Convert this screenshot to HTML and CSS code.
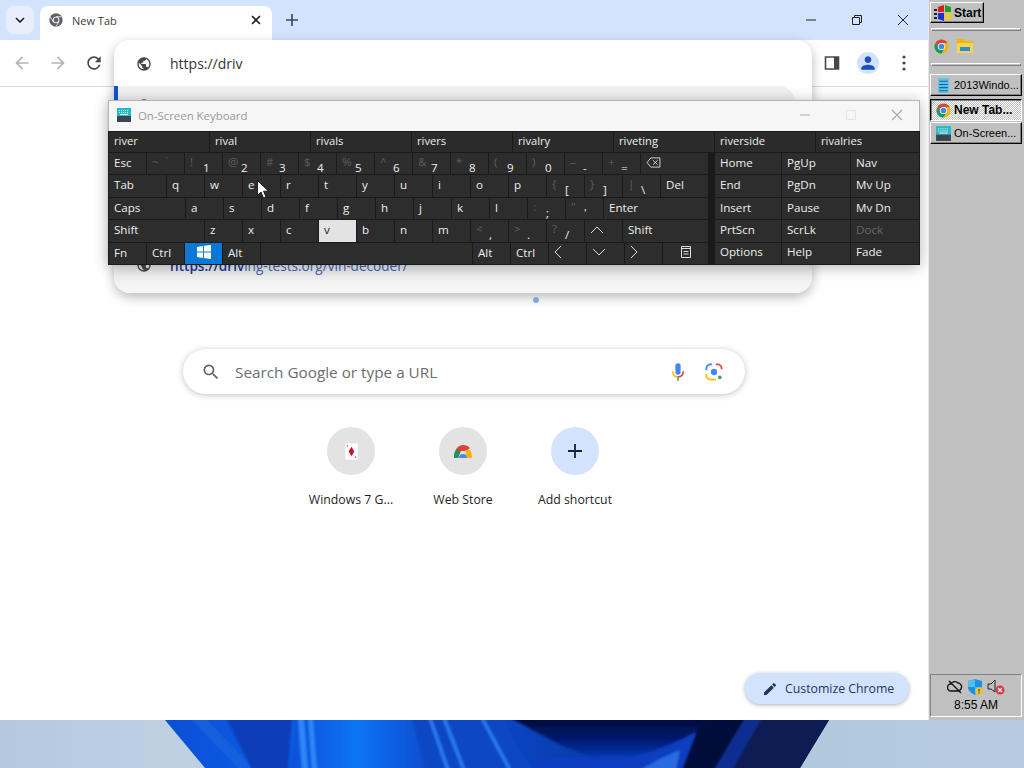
FILE: index.html
```html
<!DOCTYPE html>
<html lang="en">
<head>
    <meta charset="UTF-8">
    <title>New Tab</title>
    <link rel="stylesheet" href="styles.css">
</head>
<body>
<svg class="defs" width="0" height="0">
    <defs>
        <symbol id="chrome-logo" viewBox="0 0 24 24">
            <path fill="#db4437" d="M12 2A10 10 0 0 0 3.34 7l4.33 7.5A5 5 0 0 1 12 7h8.66A10 10 0 0 0 12 2z"/>
            <path fill="#f4b400" d="M20.66 7H12a5 5 0 0 1 4.33 7.5L12 22A10 10 0 0 0 20.66 7z"/>
            <path fill="#0f9d58" d="M3.34 7A10 10 0 0 0 12 22l4.33-7.5a5 5 0 0 1-8.66 0z"/>
            <circle cx="12" cy="12" r="5" fill="#fff"/>
            <circle cx="12" cy="12" r="4" fill="#4285f4"/>
        </symbol>
        <symbol id="globe" viewBox="0 0 24 24">
            <path d="M12 2C6.48 2 2 6.48 2 12s4.48 10 10 10 10-4.48 10-10S17.52 2 12 2zm-1 17.93c-3.95-.49-7-3.85-7-7.93 0-.62.08-1.21.21-1.79L9 15v1c0 1.1.9 2 2 2v1.93zm6.9-2.54c-.26-.81-1-1.39-1.9-1.39h-1v-3c0-.55-.45-1-1-1H8v-2h2c.55 0 1-.45 1-1V7h2c1.1 0 2-.9 2-2v-.41c2.93 1.19 5 4.06 5 7.41 0 2.08-.8 3.97-2.1 5.39z"/>
        </symbol>
        <symbol id="osk-logo" viewBox="0 0 16 16">
            <rect x="1" y="1" width="14" height="8" fill="#2bb8c8"/>
            <rect x="1" y="9" width="14" height="6" fill="#3c4450"/>
            <path d="M3 3h1v1H3zm2 0h1v1H5zm2 0h1v1H7zm2 0h1v1H9zm2 0h1v1h-1zM3 5h1v1H3zm2 0h1v1H5zm2 0h1v1H7zm2 0h1v1H9zm2 0h1v1h-1zM4 7h8v1H4z" fill="#d8f6fa"/>
        </symbol>
    </defs>
</svg>

<div class="desktop">
    <svg class="wallpaper" viewBox="0 0 1024 48" width="1024" height="48">
        <defs>
            <linearGradient id="wp-base" x1="0" x2="1" y1="0" y2="0">
                <stop offset="0" stop-color="#0b4fd6"/>
                <stop offset="0.25" stop-color="#0a62ea"/>
                <stop offset="0.5" stop-color="#0a45c4"/>
                <stop offset="1" stop-color="#06225f"/>
            </linearGradient>
            <linearGradient id="wp-bright" x1="0" x2="1" y1="0" y2="0">
                <stop offset="0" stop-color="#0a50d8"/>
                <stop offset="0.5" stop-color="#0b74f6"/>
                <stop offset="1" stop-color="#0a4fd0"/>
            </linearGradient>
            <linearGradient id="wp-dark" x1="0" x2="0" y1="0" y2="1">
                <stop offset="0" stop-color="#000c3a"/>
                <stop offset="0.55" stop-color="#001a70"/>
                <stop offset="1" stop-color="#0838b8"/>
            </linearGradient>
            <clipPath id="wp-clip"><path d="M165 0H829L800 48H205z"/></clipPath>
            <filter id="wp-soft"><feGaussianBlur stdDeviation="1.2"/></filter>
        </defs>
        <g clip-path="url(#wp-clip)">
            <rect x="160" width="680" height="48" fill="url(#wp-base)"/>
            <g filter="url(#wp-soft)">
                <path fill="#1560e0" d="M205 -2L255 50H240L190 -2z"/>
                <path fill="#0a3eb8" d="M226 -2L252 50H288L292 -2z"/>
                <path fill="url(#wp-bright)" d="M296 -2L290 50H425L412 -2z"/>
                <path fill="#2f86f8" d="M298 -2H304L308 50H302zM308 -2H313L317 50H312z"/>
                <path fill="#0a47c4" d="M412 -2H505C512 20 525 35 532 50H425z"/>
                <path fill="#2a78f0" d="M428 -2H432L450 50H446zM442 -2H446L466 50H462zM480 -2H484L512 50H508z"/>
                <path fill="#0a3cc0" d="M530 50C545 30 575 38 612 38C650 38 675 20 700 8L690 50z"/>
                <path fill="url(#wp-dark)" d="M510 -2H724C690 15 650 38 612 38C575 38 545 15 510 -2z"/>
                <path fill="#2a6ae0" d="M640 50C650 44 665 36 680 30L676 50z"/>
                <path fill="#000e3a" d="M698 8L724 -2H750L720 50H682z"/>
                <path fill="#0a2f90" d="M745 -2H762L732 50H714z"/>
                <path fill="#071b52" d="M762 -2H835L805 50H732z"/>
            </g>
        </g>
    </svg>

    <div class="chrome">
        <div class="tabstrip">
            <div class="tab-search">
                <svg viewBox="0 0 10 6" width="10" height="6"><path d="M1 1l4 4 4-4" fill="none" stroke="#1f1f1f" stroke-width="1.6"/></svg>
            </div>
            <div class="tab">
                <svg class="tab-favicon" viewBox="0 0 24 24" width="16" height="16">
                    <circle cx="12" cy="12" r="10" fill="#5f6368"/>
                    <circle cx="12" cy="12" r="5" fill="#fff"/>
                    <circle cx="12" cy="12" r="3.6" fill="#5f6368"/>
                    <path d="M12 7h8M16.3 14.5L12 22M7.7 14.5L3.3 7" stroke="#fff" stroke-width="1.1"/>
                </svg>
                <span class="tab-title">New Tab</span>
                <svg viewBox="0 0 10 10" width="10" height="10"><path d="M1 1l8 8M9 1L1 9" stroke="#1f1f1f" stroke-width="1.6"/></svg>
            </div>
            <svg class="new-tab" viewBox="0 0 12 12" width="12" height="12"><path d="M6 0v12M0 6h12" stroke="#3c4a66" stroke-width="1.7"/></svg>
            <div class="win-btns">
                <svg viewBox="0 0 12 12" width="12" height="12"><path d="M1 6h10" stroke="#222" stroke-width="1"/></svg>
                <svg viewBox="0 0 12 12" width="12" height="12"><path d="M1.5 3.5h7v7h-7zM3.5 3.5v-2h7v7h-2" fill="none" stroke="#222" stroke-width="1"/></svg>
                <svg viewBox="0 0 12 12" width="12" height="12"><path d="M1 1l10 10M11 1L1 11" stroke="#222" stroke-width="1"/></svg>
            </div>
        </div>
        <div class="toolbar">
            <svg class="tb-icon" viewBox="0 0 24 24" width="20" height="20" fill="#b4b6b9"><path d="M20 11H7.83l5.59-5.59L12 4l-8 8 8 8 1.41-1.41L7.83 13H20v-2z"/></svg>
            <svg class="tb-icon" viewBox="0 0 24 24" width="20" height="20" fill="#b4b6b9"><path d="M4 11h12.17l-5.59-5.59L12 4l8 8-8 8-1.41-1.41L16.17 13H4v-2z"/></svg>
            <svg class="tb-icon" viewBox="0 0 24 24" width="20" height="20" fill="#474747"><path d="M17.65 6.35A7.958 7.958 0 0 0 12 4c-4.42 0-7.99 3.58-7.99 8s3.57 8 7.99 8c3.73 0 6.84-2.55 7.73-6h-2.08A5.99 5.99 0 0 1 12 18c-3.31 0-6-2.69-6-6s2.69-6 6-6c1.66 0 3.14.69 4.22 1.78L13 11h7V4l-2.35 2.35z"/></svg>
            <div class="toolbar-right">
                <svg viewBox="0 0 16 16" width="16" height="16"><path d="M1.5 2h13v12h-13z" fill="#fff" stroke="#474747" stroke-width="1.6"/><path d="M10 2h4.5v12H10z" fill="#474747"/></svg>
                <div class="avatar">
                    <svg viewBox="0 0 24 24" width="20" height="20" fill="#1a4fc0"><path d="M12 12c2.21 0 4-1.79 4-4s-1.79-4-4-4-4 1.79-4 4 1.79 4 4 4zm0 2c-2.67 0-8 1.34-8 4v2h16v-2c0-2.66-5.33-4-8-4z"/></svg>
                </div>
                <svg viewBox="0 0 4 16" width="4" height="16" fill="#474747"><circle cx="2" cy="2" r="1.6"/><circle cx="2" cy="8" r="1.6"/><circle cx="2" cy="14" r="1.6"/></svg>
            </div>
        </div>
        <div class="ntp">
            <div class="searchbox">
                <svg viewBox="0 0 24 24" width="20" height="20" fill="#5f6368"><path d="M15.5 14h-.79l-.28-.27A6.47 6.47 0 0 0 16 9.5 6.5 6.5 0 1 0 9.5 16c1.61 0 3.09-.59 4.23-1.57l.27.28v.79l5 4.99L20.49 19l-4.99-5zm-6 0C7.01 14 5 11.99 5 9.5S7.01 5 9.5 5 14 7.01 14 9.5 11.99 14 9.5 14z"/></svg>
                <span class="search-text">Search Google or type a URL</span>
                <svg class="mic" viewBox="0 0 16 22" width="14" height="20">
                    <rect x="5" y="1" width="6" height="13" rx="3" fill="#4285f4"/>
                    <path d="M2 10c0 4 2.5 6.5 6 6.5" fill="none" stroke="#fbbc04" stroke-width="1.8"/>
                    <path d="M14 10c0 4-2.5 6.5-6 6.5" fill="none" stroke="#ea4335" stroke-width="1.8"/>
                    <path d="M8 16.5V21" stroke="#34a853" stroke-width="1.8"/>
                </svg>
                <svg class="lens" viewBox="0 0 20 20" width="18" height="18">
                    <path d="M1.5 8V6a4.5 4.5 0 0 1 4.5-4.5h2" fill="none" stroke="#4285f4" stroke-width="2"/>
                    <path d="M12 1.5h2A4.5 4.5 0 0 1 18.5 6v1" fill="none" stroke="#ea4335" stroke-width="2"/>
                    <path d="M1.5 12v2A4.5 4.5 0 0 0 6 18.5h6" fill="none" stroke="#fbbc04" stroke-width="2"/>
                    <circle cx="10" cy="10" r="3.5" fill="#4285f4"/>
                    <circle cx="16.5" cy="16" r="2" fill="#34a853"/>
                </svg>
            </div>
            <div class="shortcuts">
                <div class="shortcut">
                    <div class="shortcut-icon">
                        <svg viewBox="0 0 16 20" width="15" height="19">
                            <rect x="1" y="1" width="14" height="18" rx="1" fill="#fff" stroke="#ddd" stroke-width="0.5"/>
                            <path d="M8 5l3 5-3 5-3-5z" fill="#c8102e"/>
                            <path d="M3 3h1.5v2H3zM11.5 15H13v2h-1.5z" fill="#d9798a"/>
                        </svg>
                    </div>
                    <span class="shortcut-label">Windows 7 G...</span>
                </div>
                <div class="shortcut">
                    <div class="shortcut-icon">
                        <svg viewBox="0 0 20 14" width="20" height="14">
                            <path d="M1 14C1 6 5 1 10 1c3 0 5 1 7 3l-4 3H8l-3 7z" fill="#db4437"/>
                            <path d="M1 14C1 10 2 7 4 5l3 3-2 6z" fill="#0f9d58"/>
                            <path d="M12 6h5c1.5 2 2 5 2 8h-5z" fill="#f4b400"/>
                            <path d="M6 14a4 4 0 0 1 8 0z" fill="#4285f4"/>
                        </svg>
                    </div>
                    <span class="shortcut-label">Web Store</span>
                </div>
                <div class="shortcut">
                    <div class="shortcut-icon shortcut-add">
                        <svg viewBox="0 0 14 14" width="14" height="14"><path d="M7 0v14M0 7h14" stroke="#14213d" stroke-width="1.8"/></svg>
                    </div>
                    <span class="shortcut-label">Add shortcut</span>
                </div>
            </div>
            <div class="customize">
                <svg viewBox="0 0 24 24" width="16" height="16" fill="#1f3760"><path d="M3 17.25V21h3.75L17.81 9.94l-3.75-3.75L3 17.25zM20.71 7.04a1 1 0 0 0 0-1.41l-2.34-2.34a1 1 0 0 0-1.41 0l-1.83 1.83 3.75 3.75 1.83-1.83z"/></svg>
                <span>Customize Chrome</span>
            </div>
        </div>

        <div class="omnibox">
            <div class="omni-input">
                <svg viewBox="0 0 24 24" width="16" height="16" fill="#474747"><use href="#globe"/></svg>
                <span>https://driv</span>
            </div>
            <div class="omni-row omni-selected">
                <svg viewBox="0 0 24 24" width="16" height="16" fill="#474747"><use href="#globe"/></svg>
            </div>
            <div class="omni-row omni-last">
                <svg viewBox="0 0 24 24" width="16" height="16" fill="#474747"><use href="#globe"/></svg>
                <span class="omni-url"><b>https://driv</b>ing-tests.org/vin-decoder/</span>
            </div>
        </div>
        <div class="logo-dot"></div>
    </div>

    <div class="osk">
        <div class="osk-title">
            <svg viewBox="0 0 16 16" width="16" height="16"><use href="#osk-logo"/></svg>
            <span class="osk-name">On-Screen Keyboard</span>
            <div class="osk-btns">
                <svg viewBox="0 0 12 12" width="12" height="12"><path d="M1 6h10" stroke="#aaa"/></svg>
                <svg viewBox="0 0 12 12" width="12" height="12"><path d="M1.5 1.5h9v9h-9z" fill="none" stroke="#e4e4e4"/></svg>
                <svg viewBox="0 0 12 12" width="12" height="12"><path d="M1 1l10 10M11 1L1 11" stroke="#aaa" stroke-width="1.2"/></svg>
            </div>
        </div>
        <div class="osk-suggest">
            <div>river</div><div>rival</div><div>rivals</div><div>rivers</div>
            <div>rivalry</div><div>riveting</div><div>riverside</div><div class="suggest-last">rivalries</div>
        </div>
        <div class="osk-keys">
            <div class="osk-main">
                <div class="key-row">
                    <div class="key">Esc</div>
                    <div class="key pair pair-dim"><i>~</i><b>`</b></div>
                    <div class="key pair"><i>!</i><b>1</b></div>
                    <div class="key pair"><i>@</i><b>2</b></div>
                    <div class="key pair"><i>#</i><b>3</b></div>
                    <div class="key pair"><i>$</i><b>4</b></div>
                    <div class="key pair"><i>%</i><b>5</b></div>
                    <div class="key pair"><i>^</i><b>6</b></div>
                    <div class="key pair"><i>&amp;</i><b>7</b></div>
                    <div class="key pair"><i>*</i><b>8</b></div>
                    <div class="key pair"><i>(</i><b>9</b></div>
                    <div class="key pair"><i>)</i><b>0</b></div>
                    <div class="key pair"><i>–</i><b>-</b></div>
                    <div class="key pair"><i>+</i><b>=</b></div>
                    <div class="key key-fill">
                        <svg viewBox="0 0 16 12" width="15" height="11"><path d="M5 1h10v10H5L1 6zM7.5 3.5l5 5M12.5 3.5l-5 5" fill="none" stroke="#ddd"/></svg>
                    </div>
                </div>
                <div class="key-row">
                    <div class="key key-tab">Tab</div>
                    <div class="key">q</div><div class="key">w</div><div class="key">e</div><div class="key">r</div>
                    <div class="key">t</div><div class="key">y</div><div class="key">u</div><div class="key">i</div>
                    <div class="key">o</div><div class="key">p</div>
                    <div class="key pair"><i>{</i><b>[</b></div>
                    <div class="key pair"><i>}</i><b>]</b></div>
                    <div class="key pair"><i>|</i><b>\</b></div>
                    <div class="key key-fill">Del</div>
                </div>
                <div class="key-row">
                    <div class="key key-caps">Caps</div>
                    <div class="key">a</div><div class="key">s</div><div class="key">d</div><div class="key">f</div>
                    <div class="key">g</div><div class="key">h</div><div class="key">j</div><div class="key">k</div>
                    <div class="key">l</div>
                    <div class="key pair"><i>:</i><b>;</b></div>
                    <div class="key pair"><i>"</i><b>'</b></div>
                    <div class="key key-fill">Enter</div>
                </div>
                <div class="key-row">
                    <div class="key key-shift">Shift</div>
                    <div class="key">z</div><div class="key">x</div><div class="key">c</div>
                    <div class="key key-on">v</div>
                    <div class="key">b</div><div class="key">n</div><div class="key">m</div>
                    <div class="key pair"><i>&lt;</i><b>,</b></div>
                    <div class="key pair"><i>&gt;</i><b>.</b></div>
                    <div class="key pair"><i>?</i><b>/</b></div>
                    <div class="key">
                        <svg viewBox="0 0 14 8" width="14" height="8"><path d="M1 7l6-6 6 6" fill="none" stroke="#ddd"/></svg>
                    </div>
                    <div class="key key-fill">Shift</div>
                </div>
                <div class="key-row">
                    <div class="key">Fn</div>
                    <div class="key">Ctrl</div>
                    <div class="key key-win">
                        <svg viewBox="0 0 14 14" width="14" height="14" fill="#fff"><path d="M0 2l6-1v5.5H0zM7 .8L14 0v6.5H7zM0 7.5h6V13l-6-1zM7 7.5h7V14l-7-1z"/></svg>
                    </div>
                    <div class="key">Alt</div>
                    <div class="key key-space"></div>
                    <div class="key">Alt</div>
                    <div class="key">Ctrl</div>
                    <div class="key">
                        <svg viewBox="0 0 8 14" width="8" height="14"><path d="M7 1L1 7l6 6" fill="none" stroke="#ddd"/></svg>
                    </div>
                    <div class="key">
                        <svg viewBox="0 0 14 8" width="14" height="8"><path d="M1 1l6 6 6-6" fill="none" stroke="#ddd"/></svg>
                    </div>
                    <div class="key">
                        <svg viewBox="0 0 8 14" width="8" height="14"><path d="M1 1l6 6-6 6" fill="none" stroke="#ddd"/></svg>
                    </div>
                    <div class="key key-fill key-menu">
                        <svg viewBox="0 0 10 12" width="10" height="12"><path d="M.5.5h9v11h-9zM.5 2.5h9M2.5 5.5h5M2.5 8h5" fill="none" stroke="#ddd"/></svg>
                    </div>
                </div>
            </div>
            <div class="osk-side">
                <div class="key">Home</div><div class="key">PgUp</div><div class="key">Nav</div>
                <div class="key">End</div><div class="key">PgDn</div><div class="key">Mv Up</div>
                <div class="key">Insert</div><div class="key">Pause</div><div class="key">Mv Dn</div>
                <div class="key">PrtScn</div><div class="key">ScrLk</div><div class="key key-off">Dock</div>
                <div class="key">Options</div><div class="key">Help</div><div class="key">Fade</div>
            </div>
        </div>
    </div>

    <svg class="cursor" viewBox="0 0 12 19" width="12" height="19"><path d="M.5.5v15l3.5-3.5 2.5 6 2.5-1-2.500-5.800h5z" fill="#fff" stroke="#000" stroke-width="0.8"/></svg>

    <div class="taskbar">
        <div class="start-btn">
            <svg viewBox="0 0 18 16" width="18" height="16">
                <path d="M0 4h3v2H0zM0 8h3v2H0zM0 12h3v2H0z" fill="#222"/>
                <path d="M4 2l6-2v7H4z" fill="#d82020"/>
                <path d="M11 0l6 2v5h-6z" fill="#20a020"/>
                <path d="M4 8h6v8l-6-2z" fill="#2030d0"/>
                <path d="M11 8h6v6l-6 2z" fill="#e8d020"/>
            </svg>
            <span>Start</span>
        </div>
        <div class="groove"></div>
        <div class="quick">
            <svg viewBox="0 0 24 24" width="17" height="17"><use href="#chrome-logo"/></svg>
            <svg viewBox="0 0 18 16" width="18" height="16">
                <path d="M1 1h6l2 2h8v4H1z" fill="#f2b705"/>
                <path d="M1 5h16v10H1z" fill="#fbd24e"/>
                <path d="M4 9h10v4H4z" fill="#2a8fd8"/>
            </svg>
        </div>
        <div class="groove"></div>
        <div class="task">
            <svg viewBox="0 0 12 16" width="17" height="17">
                <path d="M1 1h10v14H1z" fill="#5fc0e8"/>
                <path d="M2 4h8M2 7h8M2 10h8M2 13h8" stroke="#0a6aa0"/>
            </svg>
            <span>2013Windo...</span>
        </div>
        <div class="task task-active">
            <svg viewBox="0 0 24 24" width="17" height="17"><use href="#chrome-logo"/></svg>
            <span>New Tab...</span>
        </div>
        <div class="task">
            <svg viewBox="0 0 16 16" width="17" height="17"><use href="#osk-logo"/></svg>
            <span>On-Screen...</span>
        </div>
        <div class="tray">
            <div class="tray-icons">
                <svg viewBox="0 0 16 14" width="16" height="14"><path d="M4 11a3.5 3.5 0 0 1 0-7c1-2.5 5-3.5 7-1 2 0 4 2 3.5 4.5C14 10 12 11 10 11zM2 1l12 12" fill="none" stroke="#111" stroke-width="1.3"/></svg>
                <svg viewBox="0 0 16 16" width="16" height="16">
                    <path d="M8 0l7 2v6c0 4-3 6-7 8-4-2-7-4-7-8V2z" fill="#1f8fe0"/>
                    <path d="M8 0v8H1V2zM8 8h7c0 4-3 6-7 8z" fill="#56bdf2"/>
                    <circle cx="12" cy="12" r="3.6" fill="#f5c518"/>
                    <path d="M12 10v2.5M12 13.5v1" stroke="#222"/>
                </svg>
                <svg viewBox="0 0 18 16" width="18" height="16">
                    <path d="M1 5h3l4-4v12L4 10H1z" fill="#c0c0c0" stroke="#222"/>
                    <circle cx="13" cy="11" r="4.5" fill="#d9363e"/>
                    <path d="M11 9l4 4M15 9l-4 4" stroke="#fff" stroke-width="1.2"/>
                </svg>
            </div>
            <span class="clock">8:55 AM</span>
        </div>
    </div>
</div>
</body>
</html>
```

FILE: styles.css
```css
* {
    box-sizing: border-box;
}
html, body {
    margin: 0;
    height: 768px;
    overflow: hidden;
}
.defs {
    position: absolute;
}
.desktop {
    position: relative;
    width: 1024px;
    height: 768px;
    overflow: hidden;
    background: linear-gradient(to right, #b4c9de, #c4d3e5 25%, #b2c9dd 80%, #b6cbdf);
    font-family: "Open Sans", sans-serif;
}
.wallpaper {
    position: absolute;
    left: 0;
    bottom: 0;
}

/* chrome window */
.chrome {
    position: absolute;
    left: 0;
    top: 0;
    width: 928px;
    height: 720px;
    display: flex;
    flex-direction: column;
    background: #fff;
}
.tabstrip {
    height: 40px;
    flex: none;
    display: flex;
    align-items: flex-start;
    background: #d3e3fd;
    padding-left: 6px;
}
.tab-search {
    width: 28px;
    height: 28px;
    margin-top: 6px;
    border-radius: 8px;
    background: #e6eefc;
    display: flex;
    align-items: center;
    justify-content: center;
}
.tab {
    width: 232px;
    height: 34px;
    margin: 6px 0 0 6px;
    padding: 0 11px 6px 8px;
    background: #fff;
    border-radius: 8px 8px 0 0;
    display: flex;
    align-items: center;
}
.tab-favicon {
    margin-right: 8px;
}
.tab-title {
    flex: 1;
    font-size: 11px;
    color: #3c3c3c;
}
.new-tab {
    margin: 14px 0 0 14px;
}
.win-btns {
    margin-left: auto;
    margin-top: 14px;
    padding-right: 19px;
    display: flex;
    gap: 34px;
}
.toolbar {
    height: 47px;
    flex: none;
    display: flex;
    align-items: center;
    gap: 16px;
    padding: 0 6px 1px 12px;
    background: #fff;
    border-bottom: 1px solid #dcdcdc;
    border-radius: 8px 8px 0 0;
}
.toolbar-right {
    margin-left: auto;
    display: grid;
    grid-template-columns: repeat(3, 36px);
    align-items: center;
    justify-items: center;
}
.avatar {
    width: 22px;
    height: 22px;
    border-radius: 50%;
    background: #d3e3fd;
    display: flex;
    align-items: center;
    justify-content: center;
}

/* new tab page */
.ntp {
    flex: 1;
    position: relative;
    display: flex;
    flex-direction: column;
    align-items: center;
    padding-top: 262px;
}
.searchbox {
    width: 562px;
    height: 45px;
    border-radius: 23px;
    background: #fff;
    box-shadow: 0 1px 6px rgba(32, 33, 36, 0.28);
    display: flex;
    align-items: center;
    padding: 0 22px 0 18px;
}
.search-text {
    flex: 1;
    margin-left: 14px;
    font-size: 15.3px;
    color: #6a6d70;
}
.mic {
    margin-right: 20px;
}
.shortcuts {
    display: flex;
    margin-top: 33px;
    margin-left: -2px;
}
.shortcut {
    width: 112px;
    display: flex;
    flex-direction: column;
    align-items: center;
}
.shortcut-icon {
    width: 48px;
    height: 48px;
    border-radius: 50%;
    background: #e3e3e3;
    display: flex;
    align-items: center;
    justify-content: center;
}
.shortcut-add {
    background: #d3e3fd;
}
.shortcut-label {
    margin-top: 16px;
    font-size: 12.3px;
    line-height: 18px;
    color: #1f1f1f;
}
.customize {
    position: absolute;
    right: 19px;
    bottom: 16px;
    width: 164px;
    height: 31px;
    padding-left: 17px;
    border-radius: 16px;
    background: #d3e3fd;
    box-shadow: 0 1px 4px rgba(32, 33, 36, 0.35);
    display: flex;
    align-items: center;
    gap: 7px;
    font-size: 12.3px;
    color: #1f3760;
}

/* address dropdown, lies over the page */
.omnibox {
    position: absolute;
    left: 114px;
    top: 40px;
    width: 698px;
    height: 253px;
    border-radius: 16px;
    background: linear-gradient(#fff 225px, #ebebeb 225px, #f7f7f7);
    box-shadow: 0 4px 12px rgba(0, 0, 0, 0.28);
    display: flex;
    flex-direction: column;
}
.omni-input {
    height: 47px;
    flex: none;
    padding-left: 22px;
    display: flex;
    align-items: center;
    gap: 18px;
    font-size: 14px;
    color: #333;
}
.omni-row {
    height: 32px;
    flex: none;
    padding-left: 22px;
    display: flex;
    align-items: center;
    gap: 18px;
}
.omni-selected {
    width: 681px;
    height: 36px;
    margin-top: -1px;
    padding: 3px 0 0 18px;
    background: #f1f1f1;
    border-left: 4px solid #0b57d0;
    border-radius: 0 16px 16px 0;
}
.omni-last {
    margin-top: auto;
    margin-bottom: 12px;
}
.omni-url {
    font-size: 13.6px;
    color: #3f63b5;
}
.omni-url b {
    color: #16399c;
    font-weight: 600;
}
.logo-dot {
    position: absolute;
    left: 533px;
    top: 297px;
    width: 6px;
    height: 6px;
    border-radius: 50%;
    background: #82a8d8;
}

/* on-screen keyboard */
.osk {
    position: absolute;
    left: 108px;
    top: 100px;
    width: 812px;
    height: 165px;
    background: #1a1a1a;
    box-shadow: 0 2px 14px rgba(0, 0, 0, 0.3);
    display: flex;
    flex-direction: column;
    font-size: 11.6px;
    color: #eee;
}
.osk-title {
    height: 31px;
    flex: none;
    background: #f6f6f6;
    border: 1px solid #b4b4b4;
    border-bottom: none;
    display: flex;
    align-items: center;
    padding: 0 0 2px 7px;
    gap: 6px;
}
.osk-name {
    flex: 1;
    color: #999;
    font-size: 11.4px;
}
.osk-btns {
    display: flex;
    gap: 34px;
    padding-right: 16px;
}
.osk-suggest {
    height: 22px;
    flex: none;
    display: flex;
    padding: 1px 0 1px 1px;
    font-size: 11.2px;
}
.osk-suggest div {
    width: 101px;
    flex: none;
    padding-left: 5px;
    line-height: 18px;
    background: #2b2b2b;
    border-right: 1px solid #1a1a1a;
}
.osk-suggest .suggest-last {
    flex: 1;
}
.osk-keys {
    flex: 1;
    display: flex;
    padding-left: 1px;
}
.osk-main {
    width: 600px;
    margin-right: 6px;
    display: flex;
    flex-direction: column;
}
.key-row {
    flex: 1;
    display: flex;
}
.key {
    width: 38px;
    flex: none;
    padding: 0 0 2px 5px;
    display: flex;
    align-items: center;
    background: #2d2d2d;
    border-right: 1px solid #1a1a1a;
    border-bottom: 1px solid #1a1a1a;
    line-height: 1;
}
.pair {
    padding-bottom: 0;
}
.pair i {
    width: 13px;
    flex: none;
    align-self: flex-start;
    margin-top: 3px;
    font-style: normal;
    font-size: 11.6px;
    color: #5e5e5e;
}
.pair b {
    align-self: flex-end;
    margin-bottom: 1px;
    font-weight: 400;
    font-size: 11.6px;
}
.pair-dim b {
    align-self: flex-start;
    margin-top: 3px;
    color: #5e5e5e;
}
.key-tab {
    width: 58px;
}
.key-caps {
    width: 77px;
}
.key-shift {
    width: 96px;
}
.key-space {
    width: 212px;
}
.key-fill {
    flex: 1;
}
.key-on {
    background: #e3e3e3;
    color: #222;
}
.key-win {
    background: #0a78d4;
    justify-content: center;
    padding-left: 0;
}
.key-menu {
    justify-content: center;
    padding-left: 0;
}
.osk-side {
    flex: 1;
    display: grid;
    grid-template-columns: 67px 69px 1fr;
    grid-template-rows: repeat(5, 1fr);
}
.osk-side .key {
    width: auto;
}
.key-off {
    color: #666;
}
.cursor {
    position: absolute;
    left: 257px;
    top: 180px;
}

/* old style taskbar on the right */
.taskbar {
    position: absolute;
    left: 928px;
    top: 0;
    width: 96px;
    height: 720px;
    background: #c0c0c0;
    border-left: 1px solid #e8e8e8;
    padding: 2px 2px 3px 1px;
    display: flex;
    flex-direction: column;
    font-family: "Liberation Sans", sans-serif;
    font-size: 11px;
    color: #000;
}
.start-btn {
    width: 54px;
    height: 21px;
    flex: none;
    display: flex;
    align-items: center;
    gap: 2px;
    padding-left: 3px;
    background: #c0c0c0;
    border: 1px solid;
    border-color: #fff #000 #000 #fff;
    box-shadow: inset -1px -1px 0 #808080;
    font-weight: 700;
    font-size: 12px;
}
.groove {
    height: 3px;
    flex: none;
    margin: 5px 1px 0;
    border: 1px solid;
    border-color: #fff #808080 #808080 #fff;
}
.quick {
    height: 30px;
    flex: none;
    display: flex;
    align-items: center;
    gap: 6px;
    padding-left: 3px;
}
.quick + .groove {
    margin-top: 2px;
}
.task {
    height: 22px;
    flex: none;
    margin-top: 1px;
    width: 92px;
    display: flex;
    align-items: center;
    gap: 2px;
    padding-left: 4px;
    background: #c0c0c0;
    border: 1px solid;
    border-color: #fff #000 #000 #fff;
    box-shadow: inset -1px -1px 0 #808080;
    white-space: nowrap;
}
.groove + .task {
    margin-top: 8px;
}
.task-active {
    margin-top: 3px;
    border-color: #000 #fff #fff #000;
    box-shadow: inset 1px 1px 0 #808080;
    background: repeating-conic-gradient(#fff 0 25%, #c0c0c0 0 50%) 0 0 / 2px 2px;
    font-weight: 700;
    font-size: 12px;
}
.tray {
    margin-top: auto;
    width: 92px;
    height: 43px;
    flex: none;
    border: 1px solid;
    border-color: #808080 #fff #fff #808080;
    display: flex;
    flex-direction: column;
    align-items: center;
    justify-content: center;
    gap: 3px;
}
.tray-icons {
    display: flex;
    align-items: center;
    gap: 4px;
}
.clock {
    font-size: 12px;
}
```
